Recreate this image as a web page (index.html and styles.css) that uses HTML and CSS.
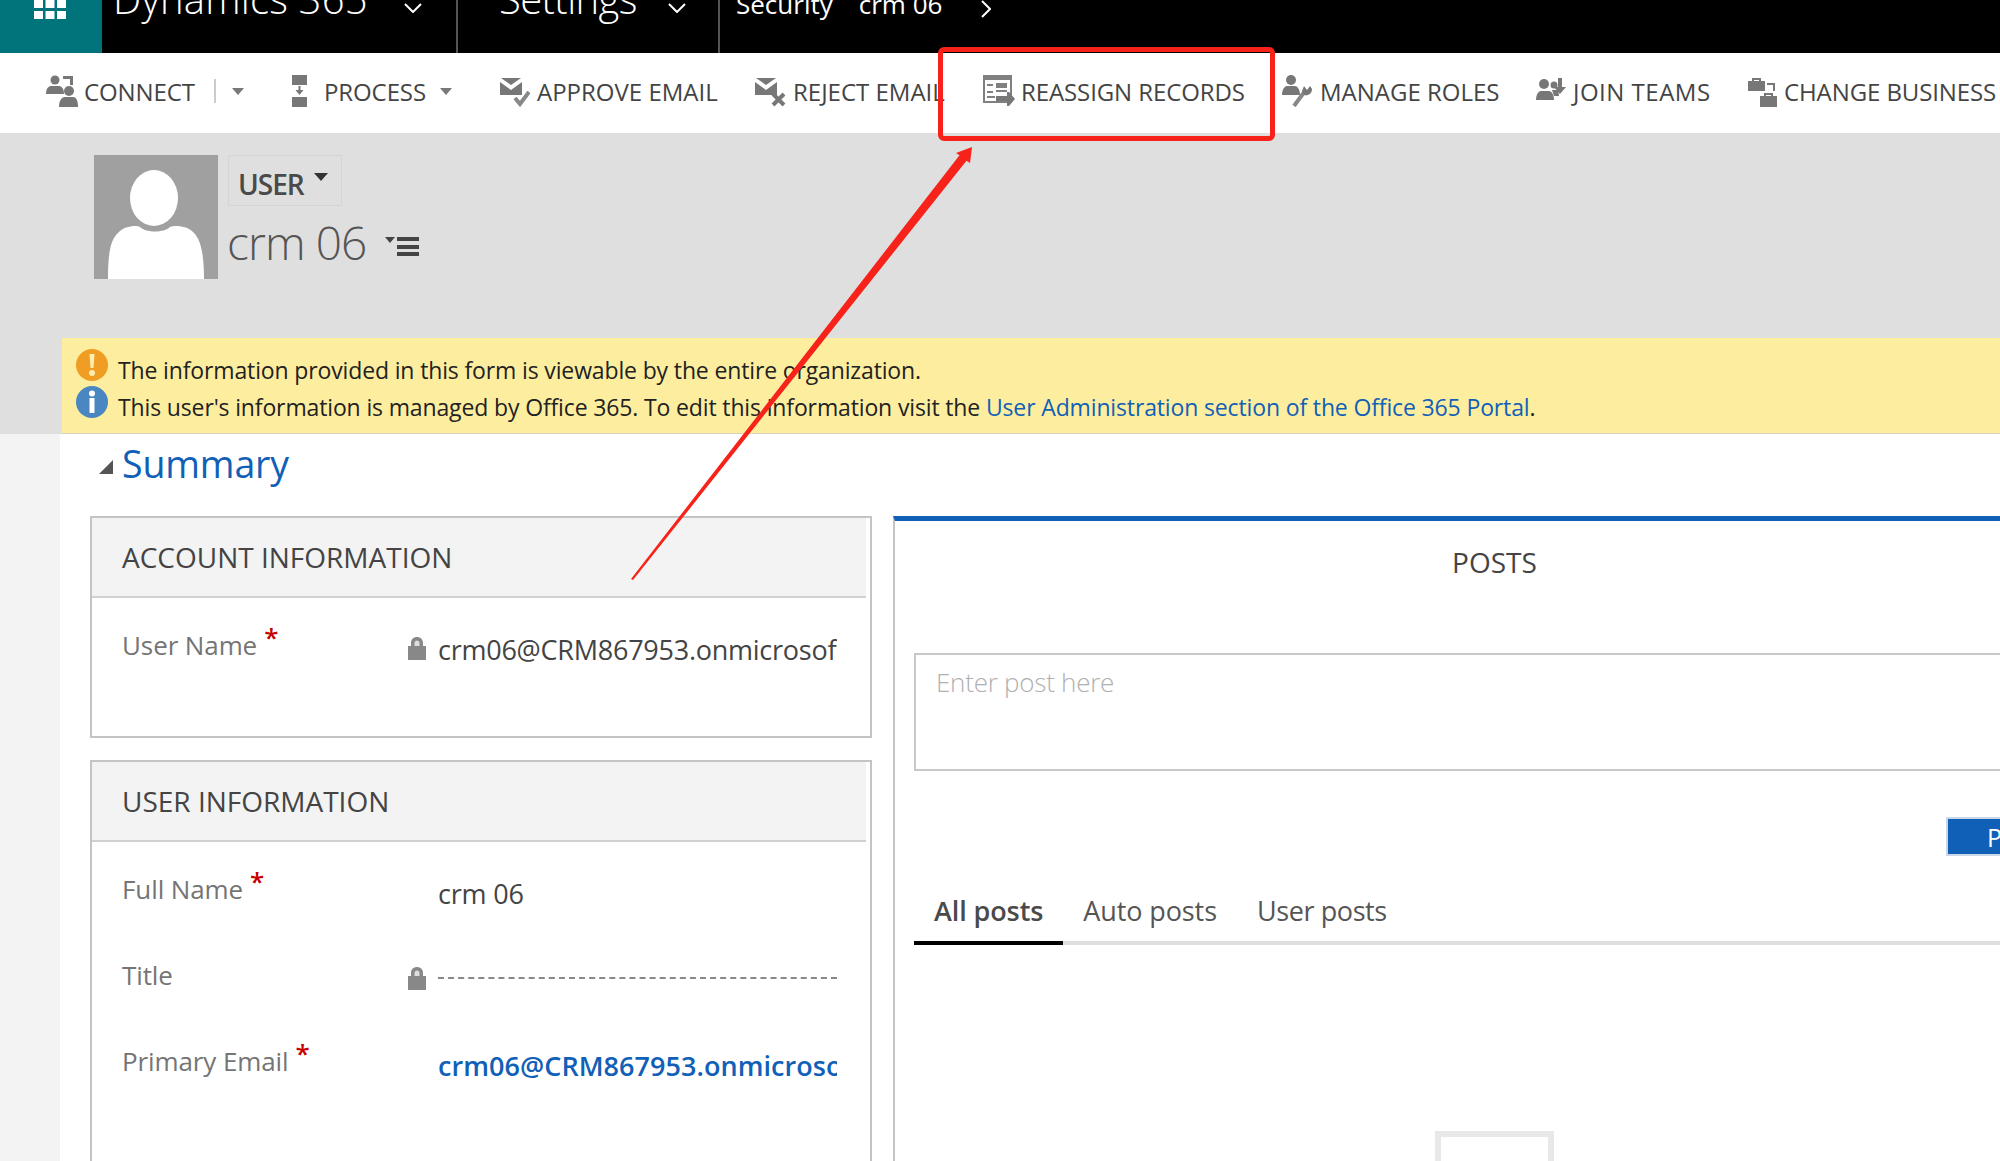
FILE: index.html
```html
<!DOCTYPE html>
<html lang="en">
<head>
<meta charset="utf-8">
<title>crm 06 - User</title>
<link rel="stylesheet" href="styles.css">
</head>
<body>
<div class="page">
  <header class="appbar">
    <div class="tile">
      <svg class="waffle" width="32" height="19" viewBox="0 0 32 19"><path d="M0 0h9v8H0zM11.500 0h9v8h-9zM23 0h9v8h-9zM0 11h9v8H0zM11.500 11h9v8h-9zM23 11h9v8h-9z" fill="#fff"/></svg>
    </div>
    <div class="app-section app-product">
      <span class="app-title app-title-product">Dynamics 365</span>
      <svg class="chev" width="18" height="10" viewBox="0 0 18 10"><path d="M1 1l8 8 8-8" fill="none" stroke="#fff" stroke-width="2"/></svg>
    </div>
    <div class="app-section app-area">
      <span class="app-title app-title-area">Settings</span>
      <svg class="chev" width="18" height="10" viewBox="0 0 18 10"><path d="M1 1l8 8 8-8" fill="none" stroke="#fff" stroke-width="2"/></svg>
    </div>
    <div class="app-crumbs">
      <span class="crumb crumb-a">Security</span>
      <span class="crumb crumb-b">crm 06</span>
      <svg class="crumb-chev" width="10" height="18" viewBox="0 0 10 18"><path d="M1 1l8 8-8 8" fill="none" stroke="#fff" stroke-width="2"/></svg>
    </div>
  </header>

  <nav class="ribbon">
    <div class="cmd">
      <svg class="ico" width="32" height="32" viewBox="0 0 32 32"><g fill="#777"><circle cx="9" cy="5" r="4.500"/><path d="M0 19c0-6 3-8 5-8h8c2 0 5 2 5 8z"/><circle cx="23" cy="16" r="5"/><path d="M13 32c0-7 3-10 6-10h8c3 0 5 3 5 10z"/><path d="M17 1h10v9h-3V4h-7z"/></g></svg>
      <span class="cmd-label">CONNECT</span>
      <span class="split"></span>
      <span class="caret"></span>
    </div>
    <div class="cmd">
      <svg class="ico" width="15" height="32" viewBox="0 0 15 32"><g fill="#777"><path d="M0 0h15v10H0zM0 22h15v10H0zM6.500 11h2v4h3l-4 5-4-5h3z"/></g></svg>
      <span class="cmd-label cmd-label-wide">PROCESS</span>
      <span class="caret"></span>
    </div>
    <div class="cmd">
      <svg class="ico" width="30" height="32" viewBox="0 0 30 32"><g fill="#777"><path d="M1 3h20L11 10z"/><path d="M0 7l11 8 11-8v13H0z"/></g><path d="M15 23l5 6 9-12" fill="none" stroke="#888" stroke-width="4"/></svg>
      <span class="cmd-label cmd-label-loose">APPROVE EMAIL</span>
    </div>
    <div class="cmd">
      <svg class="ico" width="31" height="32" viewBox="0 0 31 32"><g fill="#777"><path d="M1 3h20L11 10z"/><path d="M0 7l11 8 11-8v13H0z"/></g><path d="M18 19l11 11M29 19L18 30" fill="none" stroke="#777" stroke-width="4"/></svg>
      <span class="cmd-label cmd-label-loose">REJECT EMAIL</span>
    </div>
    <div class="cmd">
      <svg class="ico" width="32" height="32" viewBox="0 0 32 32"><path d="M0 0h29v28H0z" fill="#808080"/><path d="M2 5h25v21H2z" fill="#fff"/><path d="M4 9h6v2H4zM4 16h6v2H4zM13 8h11v5H13zM13 15h11v2H13zM4 21h8v2H4z" fill="#808080"/><path d="M13 21h11v-4h2l6 7-6 7h-2v-5H13z" fill="#777"/></svg>
      <span class="cmd-label">REASSIGN RECORDS</span>
    </div>
    <div class="cmd">
      <svg class="ico" width="31" height="32" viewBox="0 0 31 32"><g fill="#777"><circle cx="9" cy="5" r="5"/><path d="M0 20c0-6 3-9 5-9h8c2 0 5 3 5 9z"/></g><path d="M12 31l11-15" fill="none" stroke="#888" stroke-width="4"/><path d="M22 11l3 4 3-4 2 3c0 5-4 7-8 6l-2-4z" fill="#777"/></svg>
      <span class="cmd-label cmd-label-loose">MANAGE ROLES</span>
    </div>
    <div class="cmd">
      <svg class="ico" width="30" height="32" viewBox="0 0 30 32"><g fill="#777"><circle cx="8" cy="9" r="5"/><circle cx="18" cy="10" r="3.500"/><path d="M0 25c0-6 3-9 5-9h8c2 0 5 3 5 9z"/><path d="M16 15h5c1 1 2 3 2 6h-5zM22 3h4v9h4l-6 7-6-7h4z"/></g></svg>
      <span class="cmd-label cmd-label-join">JOIN TEAMS</span>
    </div>
    <div class="cmd cmd-last">
      <svg class="ico" width="30" height="32" viewBox="0 0 30 32"><g fill="#777"><path d="M0 6h4V3h9v3h4v10H0zM6 5v1h5V5z"/><path d="M12 21h4v-3h9v3h4v11H12zM18 20v1h5v-1z"/></g><path d="M19 9h7v7" fill="none" stroke="#777" stroke-width="2"/></svg>
      <span class="cmd-label">CHANGE BUSINESS</span>
    </div>
  </nav>

  <section class="record-head">
    <svg class="avatar" width="124" height="124" viewBox="0 0 124 124"><path d="M0 0h124v124H0z" fill="#a0a0a0"/><ellipse cx="60" cy="43" rx="24" ry="28" fill="#fff"/><path d="M14 124c0-24 2-39 10-46 6-7 18-8 22-6 6 6 24 6 30 0 6-2 18-1 24 6 7 7 10 22 10 46z" fill="#fff"/></svg>
    <div class="record-id">
      <div class="entity-pick"><span class="entity-name">USER</span><span class="entity-caret"></span></div>
      <div class="record-name-row">
        <span class="record-name">crm 06</span>
        <svg class="record-menu" width="34" height="20" viewBox="0 0 34 20"><path d="M0 1h10L5 7z" fill="#444"/><path d="M12 1h22v4H12zM12 9h22v4H12zM12 16h22v4H12z" fill="#444"/></svg>
      </div>
    </div>
  </section>

  <section class="notice-wrap">
    <div class="notice">
      <div class="notice-row">
        <svg class="notice-ico" width="32" height="32" viewBox="0 0 32 32"><circle cx="16" cy="16" r="16" fill="#f09d24"/><path d="M13.500 5h5l-1 14h-3z" fill="#fdeeb0"/><circle cx="16" cy="24" r="3" fill="#fdeeb0"/></svg>
        <span class="notice-text">The information provided in this form is viewable by the entire organization.</span>
      </div>
      <div class="notice-row">
        <svg class="notice-ico" width="32" height="32" viewBox="0 0 32 32"><circle cx="16" cy="16" r="16" fill="#4a86c2"/><circle cx="16" cy="7.500" r="3" fill="#fff"/><path d="M13.500 12h5v15h-5z" fill="#fff"/></svg>
        <span class="notice-text">This user's information is managed by Office 365. To edit this information visit the <a class="notice-link" href="#">User Administration section of the Office 365 Portal</a>.</span>
      </div>
    </div>
  </section>

  <main class="workspace">
    <div class="sheet">
      <h2 class="section-title"><span class="twist"></span>Summary</h2>
      <div class="columns">
        <div class="form-col">
          <section class="panel panel-account">
            <h3 class="panel-head">ACCOUNT INFORMATION</h3>
            <div class="field field-first">
              <span class="label">User Name<span class="req">*</span></span>
              <span class="lock-slot"><svg width="18" height="24" viewBox="0 0 18 24"><path d="M3 10V7c0-8 12-8 12 0v3h3v14H0V10z" fill="#888"/><path d="M6.500 10V7c0-3.500 5-3.500 5 0v3z" fill="#ddd"/></svg></span>
              <span class="value value-mail">crm06@CRM867953.onmicrosoft.com</span>
            </div>
          </section>
          <section class="panel panel-user">
            <h3 class="panel-head">USER INFORMATION</h3>
            <div class="field field-first">
              <span class="label">Full Name<span class="req">*</span></span>
              <span class="lock-slot"></span>
              <span class="value">crm 06</span>
            </div>
            <div class="field">
              <span class="label">Title</span>
              <span class="lock-slot"><svg width="18" height="24" viewBox="0 0 18 24"><path d="M3 10V7c0-8 12-8 12 0v3h3v14H0V10z" fill="#888"/><path d="M6.500 10V7c0-3.500 5-3.500 5 0v3z" fill="#ddd"/></svg></span>
              <span class="value value-empty"></span>
            </div>
            <div class="field">
              <span class="label">Primary Email<span class="req">*</span></span>
              <span class="lock-slot"></span>
              <a class="value value-link" href="#">crm06@CRM867953.onmicrosoft.com</a>
            </div>
          </section>
        </div>
        <section class="posts">
          <h3 class="posts-head">POSTS</h3>
          <div class="post-input">Enter post here</div>
          <div class="post-actions"><button class="post-btn" type="button">Post</button></div>
          <div class="tabs">
            <span class="tab tab-on">All posts</span>
            <span class="tab">Auto posts</span>
            <span class="tab tab-user">User posts</span>
          </div>
          <div class="empty-box"></div>
        </section>
      </div>
    </div>
  </main>

  <div class="callout-box"></div>
  <svg class="callout-arrow" width="2000" height="1161" viewBox="0 0 2000 1161"><path d="M631 579L959.500 155.200 956 153 972 147 970 163 966.500 160.800 633 580z" fill="#f7231a"/></svg>
</div>
</body>
</html>
```
FILE: styles.css
```css
* { box-sizing: border-box; }
html, body { margin: 0; padding: 0; }
body { font-family: "Open Sans", "Liberation Sans", sans-serif; color: #444; background: #fff; }
.page { position: relative; width: 2000px; height: 1161px; overflow: hidden; }

/* app bar */
.appbar { display: flex; height: 53px; background: #000; color: #fff; overflow: hidden; }
.tile { width: 102px; background: #00737b; display: flex; justify-content: center; align-items: flex-start; padding-right: 2px; }
.app-section { display: flex; border-right: 2px solid #555; }
.app-product { width: 356px; padding-left: 11px; }
.app-area { width: 262px; padding-left: 41px; }
.app-title { font-size: 40px; font-weight: 300; line-height: 50px; margin-top: -26px; height: 50px; white-space: nowrap; }
.app-title-product { letter-spacing: 0.2px; }
.app-title-area { letter-spacing: -0.6px; }
.chev { margin-top: 3px; flex: none; }
.app-product .chev { margin-left: 36px; }
.app-area .chev { margin-left: 31px; }
.app-crumbs { display: flex; padding-left: 16px; }
.crumb { font-size: 26px; line-height: 40px; margin-top: -16px; height: 40px; white-space: nowrap; }
.crumb-b { margin-left: 26px; }
.crumb-chev { margin-left: 39px; margin-top: 0; }

/* ribbon */
.ribbon { height: 80px; padding-left: 46px; display: grid; grid-template-columns: 246px 208px 255px 228px 299px 254px 212px 252px; align-items: start; white-space: nowrap; }
.cmd { display: flex; align-items: flex-start; padding-top: 22px; }
.ico { flex: none; }
.cmd-label { font-size: 24px; line-height: 34px; margin-left: 6px; letter-spacing: -0.1px; color: #444; }
.cmd-label-wide { margin-left: 17px; }
.cmd-label-loose { margin-left: 7px; letter-spacing: 0; }
.cmd-label-join { margin-left: 7px; letter-spacing: 0.5px; }
.split { width: 2px; height: 24px; background: #ccc; margin: 4px 0 0 19px; }
.caret { width: 0; height: 0; border-left: 6.500px solid transparent; border-right: 6.500px solid transparent; border-top: 7px solid #777; margin: 13px 0 0 16px; }
.cmd-label-wide + .caret { margin-left: 14px; }

/* record header */
.record-head { height: 205px; background: #dfdfdf; padding: 22px 0 0 94px; display: flex; align-items: flex-start; }
.avatar { flex: none; }
.record-id { margin-left: 10px; display: flex; flex-direction: column; }
.entity-pick { width: 114px; height: 51px; border: 1px solid #d4d4d4; padding-left: 9px; display: flex; }
.entity-name { font-size: 28px; font-weight: 600; line-height: 56px; letter-spacing: -1px; color: #4a4a4a; }
.entity-caret { width: 0; height: 0; border-left: 7px solid transparent; border-right: 7px solid transparent; border-top: 8px solid #333; margin: 17px 0 0 10px; }
.record-name-row { display: flex; align-items: flex-start; padding-top: 5px; }
.record-name { font-size: 46px; font-weight: 300; line-height: 62px; color: #555; letter-spacing: -0.9px; margin-left: -1px; }
.record-menu { margin: 25px 0 0 19px; }

/* notices */
.notice-wrap { background: #dfdfdf; padding-left: 62px; }
.notice { height: 96px; background: #fdee9f; border-bottom: 1px solid #d9d4b8; padding: 11px 0 0 14px; display: flex; flex-direction: column; }
.notice-row { display: flex; height: 37px; white-space: nowrap; }
.notice-ico { flex: none; }
.notice-text { font-size: 23px; line-height: 32px; margin: 5px 0 0 10px; color: #222; letter-spacing: -0.14px; }
.notice-link { color: #1160b7; text-decoration: none; }

/* form */
.workspace { height: 727px; background: #f3f3f3; padding-left: 60px; }
.sheet { height: 100%; background: #fff; padding: 0 0 0 30px; overflow: hidden; }
.section-title { margin: 0; height: 82px; display: flex; align-items: flex-start; font-size: 37.500px; font-weight: 400; line-height: 56px; color: #1160b7; padding: 2px 0 0 9px; letter-spacing: -0.15px; }
.twist { width: 0; height: 0; border-bottom: 14px solid #555; border-left: 14px solid transparent; margin: 24px 9px 0 0; }
.columns { display: grid; grid-template-columns: 782px 1202px; column-gap: 21px; align-items: start; }
.form-col { display: flex; flex-direction: column; gap: 22px; }
.panel { border: 2px solid #c4c4c4; background: #fff; }
.panel-account { height: 222px; }
.panel-user { height: 600px; }
.panel-head { margin: 0 4px 0 0; height: 80px; background: #f3f3f3; border-bottom: 2px solid #d0d0d0; padding-left: 30px; font-size: 28px; font-weight: 400; line-height: 78px; color: #444; }
.field { display: grid; grid-template-columns: 286px 30px 399px; height: 86px; padding-left: 30px; }
.field-first { margin-top: 23px; }
.label { font-size: 26px; line-height: 40px; padding-top: 4px; color: #757575; letter-spacing: -0.1px; white-space: nowrap; }
.req { color: #c80000; font-size: 26px; margin-left: 7px; position: relative; top: -8px; font-weight: 600; }
.lock-slot { padding-top: 15px; height: 42px; }
.lock-slot svg { display: block; }
.value { font-size: 27px; line-height: 40px; color: #444; padding-top: 9px; height: 49px; overflow: hidden; white-space: nowrap; letter-spacing: -0.2px; }
.value-mail { letter-spacing: -0.25px; }
.value-empty { border-bottom: 2px dashed #888; height: 28px; padding: 0; }
.value-link { color: #1160b7; text-decoration: none; font-weight: 600; letter-spacing: 0.05px; }

/* posts */
.posts { height: 800px; border-left: 2px solid #c4c4c4; border-top: 5px solid #1160b7; padding: 0 20px 0 19px; display: flex; flex-direction: column; }
.posts-head { margin: 0; flex: none; height: 132px; text-align: center; font-size: 28px; font-weight: 400; line-height: 36px; padding-top: 23px; color: #444; }
.post-input { flex: none; height: 118px; border: 2px solid #c8c8c8; padding: 7px 0 0 20px; font-size: 26px; font-weight: 300; line-height: 40px; color: #b0b0b0; letter-spacing: -0.25px; }
.post-actions { flex: none; display: flex; justify-content: flex-end; margin-top: 46px; }
.post-btn { width: 129px; height: 39px; padding: 0 0 0 39px; border: 2px solid #c9d7e8; background: #1160b7; color: #fff; font: 400 25px "Open Sans", sans-serif; text-align: left; }
.tabs { flex: none; display: flex; margin-top: 38px; height: 51px; border-bottom: 4px solid #dfdfdf; }
.tab { font-size: 27px; line-height: 33px; padding: 0 20px; height: 51px; letter-spacing: -0.1px; color: #555; white-space: nowrap; }
.tab-user { letter-spacing: -0.4px; }
.tab-on { border-bottom: 4px solid #000; font-weight: 600; color: #4a4a4a; }
.empty-box { flex: none; width: 119px; height: 119px; border: 6px solid #e8e8e8; margin: 186px auto 0; }

/* annotation */
.callout-box { position: absolute; left: 938px; top: 47px; width: 337px; height: 94px; border: 5px solid #f7231a; border-radius: 6px; }
.callout-arrow { position: absolute; left: 0; top: 0; pointer-events: none; }
```
